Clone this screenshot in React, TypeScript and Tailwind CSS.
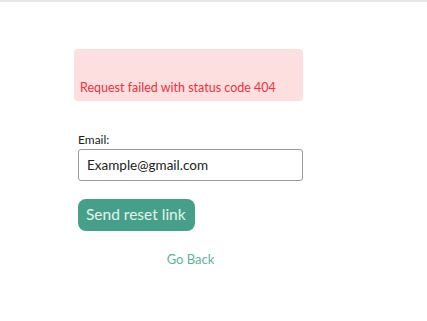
export default function App() {
  return (
    <div className="w-[427px] h-[321px] bg-white" style={{ fontFamily: 'Lato, "Open Sans", sans-serif' }}>
      {/* top rule */}
      <div className="h-[2px] bg-[#e6e6e6]"></div>

      <div className="pl-[74px] pt-[47px]">
        {/* error alert */}
        <div className="w-[229px] h-[52px] rounded-[4px] bg-[#fddfe0] flex items-end px-[6px] pb-[6px]">
          <span className="text-[12.5px] leading-[14px] text-[#ef2f3c]">Request failed with status code 404</span>
        </div>

        {/* form */}
        <form className="w-[225px] ml-[4px] mt-[32px] flex flex-col">
          <label className="text-[12px] leading-[14px] text-[#222]">Email:</label>
          <input
            className="mt-[2px] h-[32px] w-[225px] rounded-[3px] border border-[#9a9a9a] px-[8px] text-[13.5px] text-[#222] outline-none"
            defaultValue="Example@gmail.com"
          />
          <button
            type="button"
            className="mt-[18px] w-[117px] h-[32px] rounded-[8px] bg-[#46a089] text-[15.5px] text-[#e3f3ee] text-left pl-[8px]"
          >
            Send reset link
          </button>
          <a className="mt-[21px] self-center text-[13px] leading-[14px] text-[#5db39b] cursor-pointer">Go Back</a>
        </form>
      </div>
    </div>
  );
}
